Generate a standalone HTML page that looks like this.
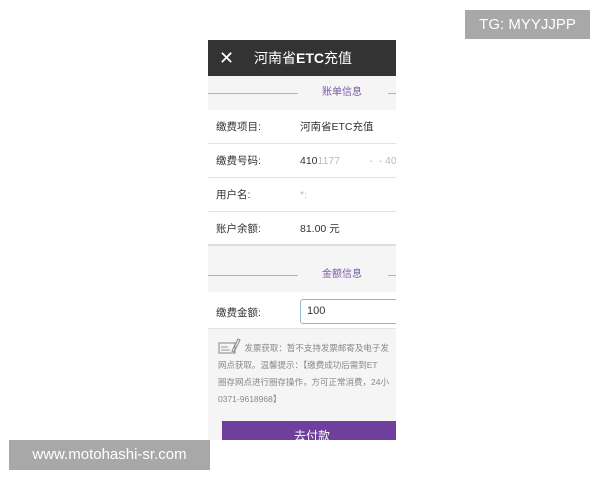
<!DOCTYPE html>
<html><head><meta charset="utf-8"><style>
*{margin:0;padding:0;box-sizing:border-box}
body{width:600px;height:480px;background:#fff;position:relative;overflow:hidden;font-family:"Liberation Sans","Noto Sans CJK SC",sans-serif}
.ph{position:absolute;left:208px;top:40px;width:188px;height:400px;background:#f5f5f5;overflow:hidden}
.hd{height:36px;background:#333;color:#fff;font-size:14px;line-height:36px;position:relative}
.hd .x{position:absolute;left:11px;top:0;font-size:18px}
.hd .t{position:absolute;left:46px}
.sec{height:34px;position:relative;font-size:10px;color:#7a5aa6;line-height:34px}
.sec .l{position:absolute;left:0;top:17px;width:90px;height:1px;background:#b9a9cc}
.sec .r{position:absolute;left:180px;top:17px;width:10px;height:1px;background:#b9a9cc}
.sec span{position:absolute;left:114px}
.row{height:34px;background:#fff;border-bottom:1px solid #e3e3e3;font-size:10.5px;color:#333;line-height:34px;position:relative}
.row .k{position:absolute;left:8px}
.row .v{position:absolute;left:92px;white-space:nowrap}
.note{font-size:8.5px;color:#888;line-height:17px;padding:9px 0 0 10px;white-space:nowrap;height:82px}
.btn{position:absolute;left:14px;top:381px;width:180px;height:24px;background:#6e3f9c;color:#fff;font-size:12px;text-align:center;line-height:30px}
.wm{position:absolute;background:#a8a8a8;color:#fff;font-size:15px}
</style></head><body>
<div class="wm" style="left:465px;top:10px;width:125px;height:29px;line-height:29px;text-align:center">TG: MYYJJPP</div>
<div class="ph">
<div class="hd"><span class="x">✕</span><span class="t">河南省<b>ETC</b>充值</span></div>
<div class="sec"><div class="l"></div><span>账单信息</span><div class="r"></div></div>
<div class="row"><span class="k">缴费项目:</span><span class="v">河南省ETC充值</span></div>
<div class="row"><span class="k">缴费号码:</span><span class="v">410<span style="color:#bbb">1177&nbsp;&nbsp;&nbsp;&nbsp;&nbsp;&nbsp;&nbsp;&nbsp;&nbsp;&nbsp;-&nbsp;&nbsp;- 404</span></span></div>
<div class="row"><span class="k">用户名:</span><span class="v" style="color:#bbb">*:</span></div>
<div class="row" style="border-bottom:2px solid #ddd"><span class="k">账户余额:</span><span class="v">81.00 元</span></div>
<div style="height:12px"></div>
<div class="sec"><div class="l"></div><span>金额信息</span><div class="r"></div></div>
<div class="row" style="height:37px;line-height:42px"><span class="k">缴费金额:</span><div style="position:absolute;left:92px;top:7px;width:100px;height:25px;border:1px solid #8fb8d8;border-radius:3px;font-size:11px;line-height:23px;padding-left:6px;background:#fff">100</div></div>
<div class="note"><svg width="24" height="16" viewBox="0 0 24 16" style="vertical-align:-3px"><rect x="1" y="5" width="16" height="10" fill="none" stroke="#999" stroke-width="1.2"/><path d="M3 9h7M3 12h9" stroke="#999"/><path d="M14 13l6-12 2 1-6 12z" fill="none" stroke="#888"/></svg> 发票获取：暂不支持发票邮寄及电子发<br>网点获取。温馨提示：【缴费成功后需到ET<br>圈存网点进行圈存操作，方可正常消费，24小<br>0371-9618968】</div>
<div class="btn">去付款</div>
</div>
<div class="wm" style="left:9px;top:440px;width:201px;height:30px;line-height:30px;text-align:center">www.motohashi-sr.com</div>
</body></html>
